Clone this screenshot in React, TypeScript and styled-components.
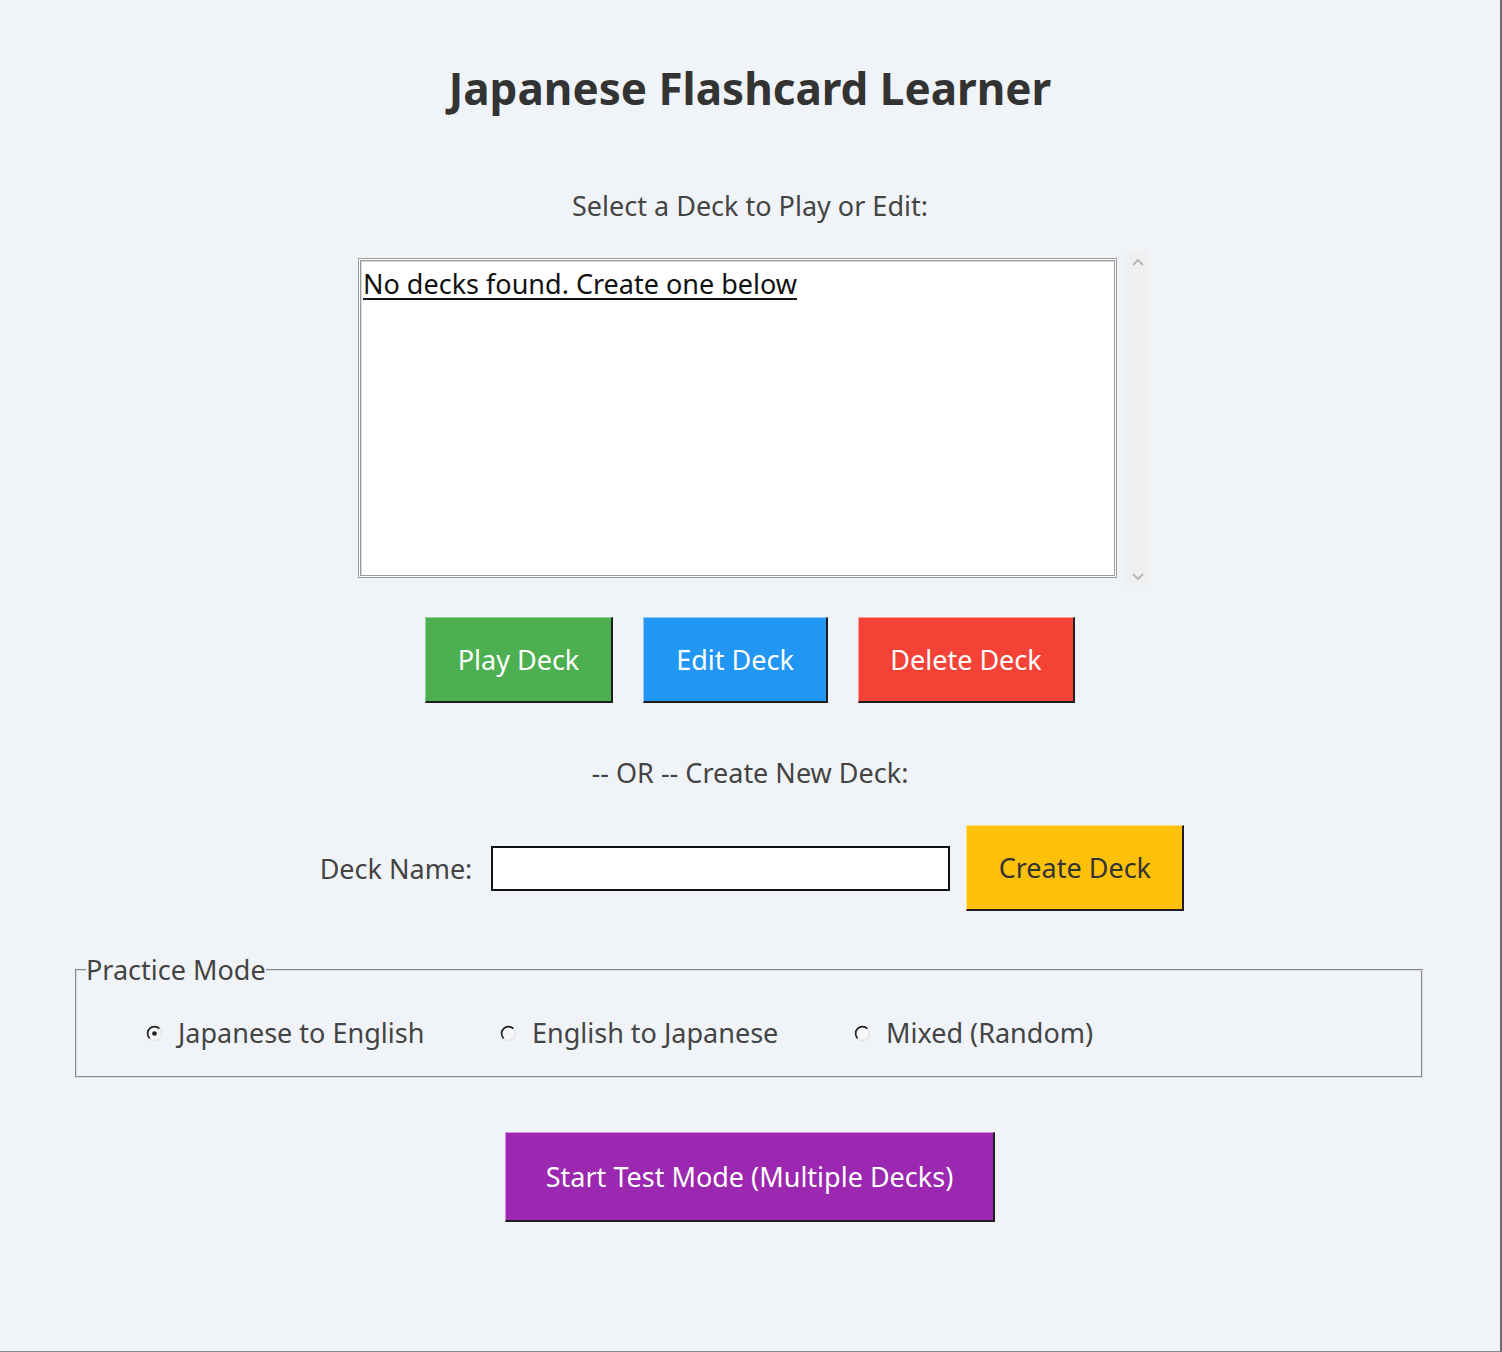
import styled, { createGlobalStyle } from "styled-components"

const GlobalStyle = createGlobalStyle`
  html, body {
    margin: 0;
    padding: 0;
    background: #f0f4f9;
  }
  body {
    font-family: "Noto Sans", "Open Sans", sans-serif;
    color: #444;
  }
`

const StyledWindow = styled.main`
  box-sizing: border-box;
  width: 1502px;
  height: 1352px;
  border-right: 2px solid #6b6b6b;
  border-bottom: 1px solid #8a8a8a;
  display: flex;
  flex-direction: column;
  align-items: center;
`
const StyledTitle = styled.h1`
  margin: 58px 0 0;
  font-size: 44px;
  line-height: 60px;
  font-weight: 700;
  color: #333;
`
const StyledCaption = styled.p<{ $top: number }>`
  margin: ${p => p.$top}px 0 0;
  font-size: 27px;
  line-height: 36px;
  color: #444;
`
const StyledListArea = styled.section`
  margin-top: 26px;
  display: flex;
  align-items: center;
  gap: 9px;
  padding-left: 7px;
`
const StyledListbox = styled.ul`
  box-sizing: border-box;
  width: 759px;
  height: 320px;
  margin: 0;
  padding: 6px 2px;
  list-style: none;
  background: #fff;
  border: 3px double #9a9a9a;
  box-shadow: inset 1px 1px 0 #d8d8d8;

  > li {
    font-size: 27px;
    line-height: 34px;
    color: #111;
    text-decoration: underline;
    text-underline-offset: 4px;
  }
`
const StyledScrollbar = styled.div`
  width: 23px;
  height: 335px;
  background: #f0f0f0;
  display: flex;
  flex-direction: column;
  justify-content: space-between;
  align-items: center;
  padding: 8px 0 4px;
  box-sizing: border-box;
  color: #b5b5b5;
`
const StyledButtonRow = styled.div`
  margin-top: 32px;
  display: flex;
  gap: 30px;
`
const StyledButton = styled.button<{ $bg: string; $light: string; $width: number; $height: number; $dark?: boolean }>`
  box-sizing: border-box;
  width: ${p => p.$width}px;
  height: ${p => p.$height}px;
  padding: 0;
  background: ${p => p.$bg};
  color: ${p => (p.$dark ? "#333" : "#fff")};
  font-family: inherit;
  font-size: 27px;
  border-style: solid;
  border-width: 1px 2px 2px 1px;
  border-color: ${p => p.$light} #1e1e1e #1e1e1e ${p => p.$light};
  cursor: pointer;
`
const StyledDeckRow = styled.div`
  margin-top: 34px;
  display: flex;
  align-items: center;
  padding-left: 4px;
`
const StyledLabel = styled.label`
  font-size: 27px;
  color: #444;
  margin-right: 19px;
`
const StyledEntry = styled.input`
  box-sizing: border-box;
  width: 459px;
  height: 45px;
  margin-right: 16px;
  border: 2px solid #111;
  background: #fff;
  font-family: inherit;
  font-size: 22px;
  outline: none;
`
const StyledModeFrame = styled.fieldset`
  box-sizing: border-box;
  align-self: stretch;
  margin: 45px 77px 0 75px;
  height: 122px;
  padding: 0;
  border: 2px groove #dcdcdc;

  > legend {
    margin-left: 9px;
    padding: 0;
    font-size: 27px;
    line-height: 28px;
    color: #444;
  }
`
const StyledRadioGroup = styled.div`
  display: flex;
  padding: 31px 0 0 69px;
`
const StyledRadioOption = styled.label`
  width: 354px;
  display: flex;
  align-items: center;
  gap: 15px;
  font-size: 27px;
  line-height: 36px;
  color: #444;
`
const StyledStartRow = styled.div`
  margin-top: 54px;
`

function RadioMark({ checked }: { checked: boolean }) {
  return (
    <svg width="17" height="17" viewBox="0 0 16 16">
      <circle cx="8" cy="8" r="6.5" fill="#f7f7f7" stroke="#e2e2e2" strokeWidth="1.2" />
      <path d="M3.4 12.6 A6.5 6.5 0 0 1 12.6 3.4" fill="none" stroke="#222" strokeWidth="1.6" />
      {checked && <circle cx="8" cy="8" r="2.2" fill="#222" />}
    </svg>
  )
}

function Chevron({ up }: { up: boolean }) {
  return (
    <svg width="12" height="8" viewBox="0 0 12 8">
      <path d={up ? "M1 7 L6 2 L11 7" : "M1 1 L6 6 L11 1"} fill="none" stroke="currentColor" strokeWidth="1.8" />
    </svg>
  )
}

const modes = ["Japanese to English", "English to Japanese", "Mixed (Random)"]

export default function App() {
  return (
    <>
      <GlobalStyle />
      <StyledWindow>
        <StyledTitle>Japanese Flashcard Learner</StyledTitle>
        <StyledCaption $top={70}>Select a Deck to Play or Edit:</StyledCaption>

        <StyledListArea>
          <StyledListbox>
            <li>No decks found. Create one below</li>
          </StyledListbox>
          <StyledScrollbar>
            <Chevron up />
            <Chevron up={false} />
          </StyledScrollbar>
        </StyledListArea>

        <StyledButtonRow>
          <StyledButton $bg="#4caf50" $light="#8fd193" $width={188} $height={86}>Play Deck</StyledButton>
          <StyledButton $bg="#2196f3" $light="#8cc8f8" $width={185} $height={86}>Edit Deck</StyledButton>
          <StyledButton $bg="#f44336" $light="#f99a93" $width={217} $height={86}>Delete Deck</StyledButton>
        </StyledButtonRow>

        <StyledCaption $top={52}>-- OR -- Create New Deck:</StyledCaption>

        <StyledDeckRow>
          <StyledLabel htmlFor="deck-name">Deck Name:</StyledLabel>
          <StyledEntry id="deck-name" />
          <StyledButton $bg="#ffc107" $light="#ffe082" $width={218} $height={86} $dark>Create Deck</StyledButton>
        </StyledDeckRow>

        <StyledModeFrame>
          <legend>Practice Mode</legend>
          <StyledRadioGroup>
            {modes.map((m, i) => (
              <StyledRadioOption key={m}>
                <RadioMark checked={i === 0} />
                {m}
              </StyledRadioOption>
            ))}
          </StyledRadioGroup>
        </StyledModeFrame>

        <StyledStartRow>
          <StyledButton $bg="#9c27b0" $light="#d58de2" $width={490} $height={90}>Start Test Mode (Multiple Decks)</StyledButton>
        </StyledStartRow>
      </StyledWindow>
    </>
  )
}
